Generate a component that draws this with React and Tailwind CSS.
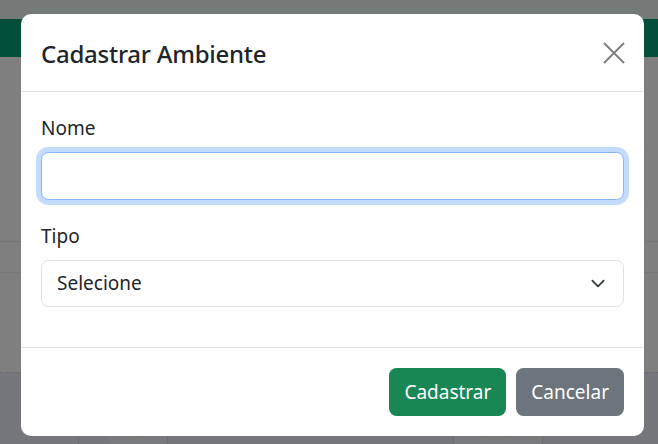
import React from "react";

export default function App() {
  const font = { fontFamily: '"Noto Sans", "Open Sans", sans-serif' };
  return (
    <div className="relative w-[658px] h-[444px] overflow-hidden bg-[#7f7f7f]" style={font}>
      {/* dimmed page behind */}
      <div className="flex flex-col h-full">
        <div className="h-[19px] bg-[#737a77]" />
        <div className="h-[38px] bg-[#03503a]" />
        <div className="h-[184px] bg-[#7f7f7f]" />
        <div className="h-[31px] border-t border-[#767676] bg-[#7f7f7f]" />
        <div className="h-[100px] border-t border-[#787878] bg-[#7f7f7f]" />
        <div className="flex-1 border-t border-dashed border-[#6a6c70] bg-[#75777b] flex flex-col">
          <div className="h-[64px]" />
          <div className="flex-1 flex">
            <div className="w-[78px]" />
            <div className="w-[32px] border-l border-[#6c6e72]" />
            <div className="w-[26px] border-l border-[#7a7b7e] bg-[#797a7c]" />
            <div className="w-[31px] border-l border-[#7a7b7e] bg-[#797a7c]" />
            <div className="w-[286px] border-l border-[#6c6e72]" />
            <div className="w-[32px] border-l border-[#6c6e72] bg-[#797a7c]" />
            <div className="w-[26px] border-l border-[#7a7b7e] bg-[#797a7c]" />
            <div className="w-[31px] border-l border-[#7a7b7e] bg-[#797a7c]" />
            <div className="flex-1 border-l border-[#6c6e72]" />
          </div>
        </div>
      </div>

      {/* modal */}
      <div className="absolute inset-0 flex items-start">
        <div className="ml-[21px] mt-[14px] w-[623px] bg-white rounded-[10px] text-[#212529] flex flex-col">
          <div className="h-[78px] pl-[20px] pr-[19px] flex items-center justify-between border-b border-[#dee2e6]">
            <div className="text-[24px] font-medium leading-[32px] h-[30px] tracking-[-0.25px]">Cadastrar Ambiente</div>
            <button className="w-[22px] h-[22px] flex items-center justify-center">
              <svg viewBox="0 0 22 22" width="22" height="22" fill="none" stroke="#7f7f7f" strokeWidth="2">
                <path d="M1 1 21 21M21 1 1 21" />
              </svg>
            </button>
          </div>
          <div className="px-[20px] pt-[20px] pb-[20px]">
            <div className="mb-[20px]">
              <div className="text-[19px] h-[30px] leading-[33px] mb-[10px]">Nome</div>
              <div className="h-[47.5px] rounded-[7.5px] border border-[#86b7fe] shadow-[0_0_0_5px_rgba(13,110,253,0.25)] bg-white" />
            </div>
            <div className="mb-[20px]">
              <div className="text-[19px] h-[30px] leading-[33px] mb-[10px]">Tipo</div>
              <div className="h-[47.5px] rounded-[7.5px] border border-[#dee2e6] bg-white flex items-center justify-between pl-[15px] pr-[15px]">
                <span className="text-[19px] leading-[30px]">Selecione</span>
                <svg viewBox="0 0 16 16" width="20" height="15" fill="none" stroke="#343a40" strokeWidth="2" strokeLinecap="round" strokeLinejoin="round">
                  <path d="m2 5 6 6 6-6" />
                </svg>
              </div>
            </div>
          </div>
          <div className="border-t border-[#dee2e6] px-[20px] py-[20px] flex justify-end gap-[10px]">
            <button className="h-[47.5px] px-[15px] rounded-[7.5px] bg-[#198754] text-white text-[19px] leading-[30px]">Cadastrar</button>
            <button className="h-[47.5px] px-[15px] rounded-[7.5px] bg-[#6c757d] text-white text-[19px] leading-[30px]">Cancelar</button>
          </div>
        </div>
      </div>
    </div>
  );
}
